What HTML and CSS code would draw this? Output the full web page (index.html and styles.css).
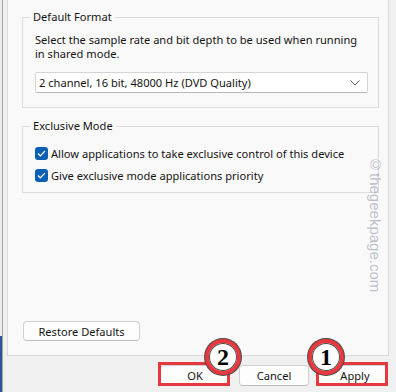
FILE: index.html
```html
<!DOCTYPE html>
<html lang="en">
<head>
  <meta charset="UTF-8">
  <title>Speakers Properties - Advanced</title>
  <link rel="stylesheet" href="styles.css">
</head>
<body>
  <div class="window">
    <div class="edge"></div>

    <div class="main">
      <!-- tab page -->
      <div class="panel">
        <fieldset class="group format">
          <legend>Default Format</legend>
          <p class="desc">Select the sample rate and bit depth to be used when running<br>in shared mode.</p>
          <div class="select">
            <span>2 channel, 16 bit, 48000 Hz (DVD Quality)</span>
            <svg width="10" height="6" viewBox="0 0 10 6"><polyline points="0.5,0.5 5,5 9.5,0.5" fill="none" stroke="#5c5c5c" stroke-width="1"/></svg>
          </div>
        </fieldset>

        <fieldset class="group exclusive">
          <legend>Exclusive Mode</legend>
          <label class="check"><span class="box"><svg width="9" height="7" viewBox="0 0 9 7"><polyline points="1,3.5 3.3,5.8 8,1" fill="none" stroke="#fff" stroke-width="1.2"/></svg></span>Allow applications to take exclusive control of this device</label>
          <label class="check"><span class="box"><svg width="9" height="7" viewBox="0 0 9 7"><polyline points="1,3.5 3.3,5.8 8,1" fill="none" stroke="#fff" stroke-width="1.2"/></svg></span>Give exclusive mode applications priority</label>
        </fieldset>

        <button class="btn restore">Restore Defaults</button>
      </div>

      <!-- dialog buttons -->
      <div class="actions">
        <button class="btn marked">OK<span class="step step-2">2</span></button>
        <button class="btn">Cancel</button>
        <button class="btn marked apply">Apply<span class="step step-1">1</span></button>
      </div>
    </div>
  </div>

  <div class="watermark">©thegeekpage.com</div>
</body>
</html>
```

FILE: styles.css
```css
/* page */
body {
  margin: 0;
  background-color: #f0f0f0;
  font-family: "Noto Sans", "Liberation Sans", sans-serif;
  font-size: 11.1px;
  color: #141414;
}

.window {
  display: flex;
  height: 392px;
}

/* left window frame */
.edge {
  width: 2px;
  background: linear-gradient(to bottom, #ececec 0, #ececec 336px, #2f5597 336px);
  border-right: 1px solid #a6a6a6;
}

.main {
  flex: 1;
  display: flex;
  flex-direction: column;
  padding-left: 4px;
  padding-right: 7px;
}

/* tab page */
.panel {
  box-sizing: border-box;
  height: 356px;
  background-color: #f9f9f9;
  border: 1px solid #dadada;
  border-top: none;
  padding: 9px 9px 14px 14px;
  display: flex;
  flex-direction: column;
}

/* group boxes */
.group {
  margin: 0;
  padding: 0 0 0 12px;
  border: 1px solid #dcdcdc;
  min-width: 0;
}

.group legend {
  margin-left: -5px;
  padding: 0 3px;
  line-height: 16px;
}

.format {
  padding-bottom: 14px;
}

.exclusive {
  margin-top: 10px;
  padding-bottom: 6px;
}

.desc {
  margin: 8px 0 0;
  line-height: 14px;
}

.select {
  margin-top: 11px;
  height: 19px;
  background-color: #fff;
  border: 1px solid #d4d4d4;
  border-bottom-color: #b8b8b8;
  border-radius: 2px;
  display: flex;
  align-items: center;
  justify-content: space-between;
  padding: 0 7px 0 3px;
  width: 321px;
}

.select svg {
  margin-top: 1px;
}

/* checkboxes */
.check {
  display: flex;
  align-items: center;
  height: 22px;
}

.check:first-of-type {
  margin-top: 8px;
}

.box {
  width: 13px;
  height: 13px;
  margin-right: 3px;
  border-radius: 3px;
  background-color: #0a5fb4;
  display: flex;
  align-items: center;
  justify-content: center;
}

/* buttons */
.btn {
  font-family: inherit;
  font-size: 11.1px;
  color: #141414;
  background-color: #fdfdfd;
  border: 1px solid #d0d0d0;
  border-bottom-color: #bdbdbd;
  border-radius: 4px;
  padding: 0;
  height: 20px;
}

.restore {
  margin-top: auto;
  margin-left: 1px;
  width: 117px;
}

.actions {
  display: flex;
  justify-content: flex-end;
  gap: 9px;
  padding-top: 9px;
  padding-right: 1px;
}

.actions .btn {
  width: 70px;
  height: 21px;
  position: relative;
}

.actions .apply {
  padding-left: 4px;
}

/* red annotation boxes */
.marked::after {
  content: "";
  position: absolute;
  top: -4px;
  left: -3px;
  right: -1px;
  bottom: -1px;
  border: 3px solid #e5383f;
}

.step {
  position: absolute;
  z-index: 1;
  width: 28px;
  height: 28px;
  border: 4px solid #e5383f;
  border-radius: 50%;
  background-color: #fff;
  box-shadow: 0 0 0 1px #4a4a4a, inset 0 0 0 1px #4a4a4a;
  font-family: "Liberation Serif", serif;
  font-weight: bold;
  font-size: 24px;
  line-height: 28px;
  text-align: center;
  color: #000;
}

.step-2 {
  top: -27px;
  left: 44px;
}

.step-1 {
  top: -27px;
  left: -11px;
}

.watermark {
  position: absolute;
  left: 367px;
  top: 156px;
  writing-mode: vertical-rl;
  font-family: "Liberation Sans", sans-serif;
  font-size: 15px;
  color: rgba(110, 115, 140, 0.45);
}
```
